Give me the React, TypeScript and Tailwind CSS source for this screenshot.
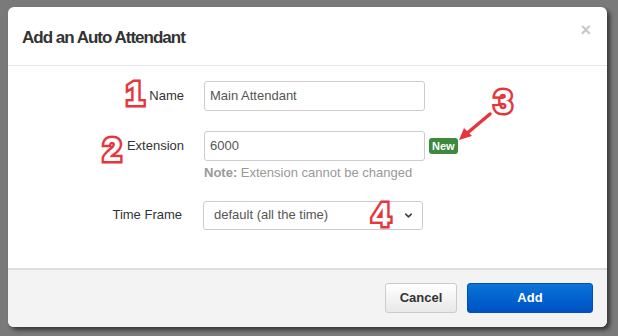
import { ChevronDown } from "lucide-react";

const numStyle =
  "absolute font-['Liberation_Sans',Arial,sans-serif] font-bold text-[33px] leading-none text-white [-webkit-text-stroke:5px_#e5363d] [paint-order:stroke_fill]";

export default function App() {
  return (
    <div className="relative w-[618px] h-[336px] bg-[#7a7a7a] pt-[7px] pl-[8px] font-['Liberation_Sans',Arial,sans-serif]">
      {/* Modal */}
      <div className="w-[599px] h-[320px] flex flex-col rounded-[6px] bg-white shadow-[3px_3px_4px_rgba(0,0,0,0.55)] overflow-hidden">
        {/* Header */}
        <div className="h-[59px] flex items-center justify-between pl-[14px] pr-[16px] border-b border-[#e5e5e5]">
          <h2 className="text-[17px] font-bold tracking-[-1px] text-[#333] pt-[4px]">Add an Auto Attendant</h2>
          <span className="text-[18px] font-bold text-[#c8c8c8] leading-none -mt-[12px]">×</span>
        </div>

        {/* Body */}
        <div className="flex-1 flex flex-col pt-[15px] text-[13px] text-[#333]">
          <div className="flex items-center gap-[20px]">
            <label className="w-[176px] text-right">Name</label>
            <div className="w-[221px] h-[30px] border border-[#ccc] rounded-[3px] px-[5px] flex items-center text-[13px] text-[#555]">
              Main Attendant
            </div>
          </div>

          <div className="flex items-center gap-[20px] mt-[20px]">
            <label className="w-[176px] text-right">Extension</label>
            <div className="w-[221px] h-[30px] border border-[#ccc] rounded-[3px] px-[5px] flex items-center text-[13px] text-[#555]">
              6000
            </div>
            <span className="-ml-[16px] h-[16px] px-[3px] rounded-[3px] bg-[#3b8a3e] text-white text-[11px] font-bold flex items-center">
              New
            </span>
          </div>
          <div className="pl-[196px] mt-[2px] text-[13px] text-[#999]">
            <b className="font-bold">Note:</b> Extension cannot be changed
          </div>

          <div className="flex items-center gap-[20px] mt-[18px]">
            <label className="w-[175px] text-right pr-[1px]">Time Frame</label>
            <div className="w-[220px] h-[29px] border border-[#ccc] rounded-[3px] pl-[10px] pr-[8px] flex items-center justify-between text-[13px] text-[#555]">
              <span>default (all the time)</span>
              <ChevronDown className="w-[11px] h-[11px] text-[#444]" strokeWidth={3.5} />
            </div>
          </div>
        </div>

        {/* Footer */}
        <div className="h-[59px] bg-[#f3f3f3] border-t-2 border-[#dedede] flex items-center justify-end gap-[10px] pr-[14px] pb-[2px]">
          <button className="w-[72px] h-[30px] rounded-[3px] border border-[#ccc] bg-gradient-to-b from-white to-[#e8e8e8] text-[13px] font-bold text-[#333]">
            Cancel
          </button>
          <button className="w-[126px] h-[30px] rounded-[3px] border border-[#0050b8] bg-gradient-to-b from-[#0d74d8] to-[#0050c4] text-[13px] font-bold text-white">
            Add
          </button>
        </div>
      </div>

      {/* Annotations */}
      <span className={`${numStyle} left-[126px] top-[77px]`}>1</span>
      <span className={`${numStyle} left-[103px] top-[133px]`}>2</span>
      <span className={`${numStyle} left-[494px] top-[85px]`}>3</span>
      <span className={`${numStyle} left-[372px] top-[198px]`}>4</span>
      <svg className="absolute left-[455px] top-[108px]" width="40" height="36" viewBox="0 0 40 36">
        <line x1="35" y1="6" x2="10" y2="27" stroke="#e5363d" strokeWidth="3.5" strokeLinecap="round" />
        <polygon points="4,32 9,20 17,28" fill="#e5363d" />
      </svg>
    </div>
  );
}
